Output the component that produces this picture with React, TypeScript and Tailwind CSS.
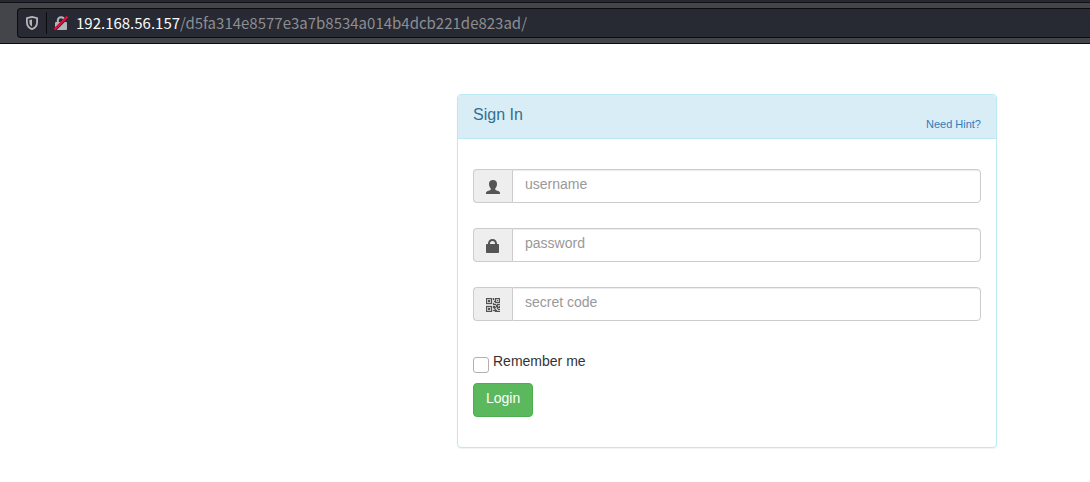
import type { ReactNode } from "react";

const UserIcon = () => (
  <svg className="size-[14px]" viewBox="0 0 14 14" fill="currentColor" aria-hidden="true">
    <path d="M7 0C9.6 0 11 1.5 11 3.9C11 6 10 7.6 9.2 8.5V9.2C9.2 9.7 9.5 10 10 10.2L12.8 11.2C13.6 11.6 14 12.1 14 12.8V14H0V12.8C0 12.1.4 11.6 1.2 11.2L4 10.2C4.5 10 4.8 9.7 4.8 9.2V8.5C4 7.6 3 6 3 3.9C3 1.5 4.4 0 7 0Z" />
  </svg>
);

const LockIcon = () => (
  <svg className="size-[14px]" viewBox="0 0 14 14" fill="currentColor" aria-hidden="true">
    <path d="M2 5V4.5C2 1.8 3.8 0 6.5 0S11 1.8 11 4.5V5H12.2Q13 5 13 5.8V13.2Q13 14 12.2 14H.8Q0 14 0 13.2V5.8Q0 5 .8 5ZM4 5H9V4.4C9 2.9 8 2 6.5 2S4 2.9 4 4.4Z" />
  </svg>
);

const QrIcon = () => (
  <svg className="size-[14px]" viewBox="0 0 14 14" fill="currentColor" stroke="currentColor" strokeWidth="0.3" aria-hidden="true">
    <path
      fillRule="evenodd"
      d="M0 0H6V6H0ZM1 1V5H5V1ZM2 2H4V4H2ZM9 0H14V5H9V4H8V3H9ZM10 1V4H13V1ZM11 2H12V3H11ZM7 0H8V2H7ZM7 5H8V6H10V7H7ZM11 6H14V7H11ZM0 8H6V14H0ZM1 9V13H5V9ZM2 10H4V12H2ZM7 8H9V9H10V10H9V11H8V10H7ZM10 7H12V9H13V8H14V10H12V11H11V9H10ZM7 12H9V11H10V12H11V13H14V14H9V13H7ZM12 11H14V12H12Z"
    />
  </svg>
);

const ShieldIcon = () => (
  <svg className="h-[14px] w-3" viewBox="0 0 12 14" fill="none" aria-hidden="true">
    <path d="M6 .9L11.1 2.1V6C11.1 9.6 9.2 12 6 13.1C2.8 12 .9 9.6 .9 6V2.1Z" stroke="#b4b5ba" strokeWidth="1.8" strokeLinejoin="round" />
    <path d="M6 3.4V10.6C4.3 9.7 3.4 8.2 3.4 6V4Z" fill="#b4b5ba" />
  </svg>
);

const InsecureIcon = () => (
  <svg className="size-[14px]" viewBox="0 0 14 14" fill="none" aria-hidden="true">
    <path d="M3.8 7V4.5C3.8 2.6 5.1 1.2 7 1.2S10.2 2.6 10.2 4.5V7" stroke="#b4b5ba" strokeWidth="2" />
    <rect x="1" y="6" width="12" height="8" rx="1" fill="#b4b5ba" />
    <path d="M1 13.6L13.6 1" stroke="#272933" strokeWidth="3" />
    <path d="M.5 13.5L13.5 .5" stroke="#e2103c" strokeWidth="2" />
  </svg>
);

function Field({ id, label, type = "text", icon }: { id: string; label: string; type?: string; icon: ReactNode }) {
  return (
    <div className="flex h-[34px]">
      <label
        htmlFor={id}
        aria-label={label}
        className="flex w-[39px] items-center justify-center rounded-l border border-r-0 border-[#ccc] bg-[#eee] pt-0.5 text-[#555]"
      >
        {icon}
      </label>
      <input
        id={id}
        type={type}
        placeholder={label}
        className="min-w-0 flex-1 rounded-r border border-[#ccc] bg-white px-3 pb-1 text-sm text-[#555] shadow-[inset_0_1px_1px_rgba(0,0,0,0.075)] outline-none placeholder:text-[#999]"
      />
    </div>
  );
}

export default function App() {
  return (
    <div className="min-h-screen bg-white font-['Liberation_Sans',Arial,sans-serif] text-sm text-[#333]">
      <header className="border-b border-[#0c0c10] bg-[#43454b]">
        <div className="h-[3px] border-b border-[#111217] bg-[#272932]" />
        <div className="py-[5px] pl-[17px]">
          <div className="flex h-[30px] items-center rounded-l border border-r-0 border-[#0c0c10] bg-[#272933] pl-2 font-['Noto_Sans_CJK_SC',sans-serif] text-[15px]">
            <ShieldIcon />
            <span className="ml-2 h-[22px] w-px bg-[#0c0c10]" />
            <span className="ml-[7px]">
              <InsecureIcon />
            </span>
            <p className="ml-2 truncate text-[#8d8e92]">
              <span className="text-[#f9f9fa]">192.168.56.157</span>/d5fa314e8577e3a7b8534a014b4dcb221de823ad/
            </p>
          </div>
        </div>
      </header>

      <main className="pt-[50px] pr-4 pb-8 pl-[457px]">
        <section className="max-w-[540px] rounded border border-[#bce8f1] shadow-[0_1px_1px_rgba(0,0,0,0.05)]">
          <div className="flex items-start justify-between rounded-t-[3px] border-b border-[#bce8f1] bg-[#d9edf7] px-[15px] pt-2.5 pb-1.5">
            <h1 className="text-base leading-5 text-[#31708f]">Sign In</h1>
            <a href="#hint" className="mt-[11px] text-[11px] leading-4 text-[#337ab7]">
              Need Hint?
            </a>
          </div>
          <form className="px-[15px] pt-[30px] pb-[30px]" onSubmit={(e) => e.preventDefault()}>
            <div className="flex flex-col gap-[25px]">
              <Field id="username" label="username" icon={<UserIcon />} />
              <Field id="password" label="password" type="password" icon={<LockIcon />} />
              <Field id="secret" label="secret code" icon={<QrIcon />} />
            </div>
            <div className="mt-[30px] flex items-start gap-1">
              <input
                id="remember"
                type="checkbox"
                className="mt-1.5 size-4 appearance-none rounded-[3px] border border-[#b6b0ab] bg-white checked:bg-[#337ab7]"
              />
              <label htmlFor="remember" className="leading-5">
                Remember me
              </label>
            </div>
            <button
              type="submit"
              className="mt-2.5 block h-[34px] rounded border border-[#4cae4c] bg-[#5cb85c] px-3 pb-1 text-sm text-white"
            >
              Login
            </button>
          </form>
        </section>
      </main>
    </div>
  );
}
